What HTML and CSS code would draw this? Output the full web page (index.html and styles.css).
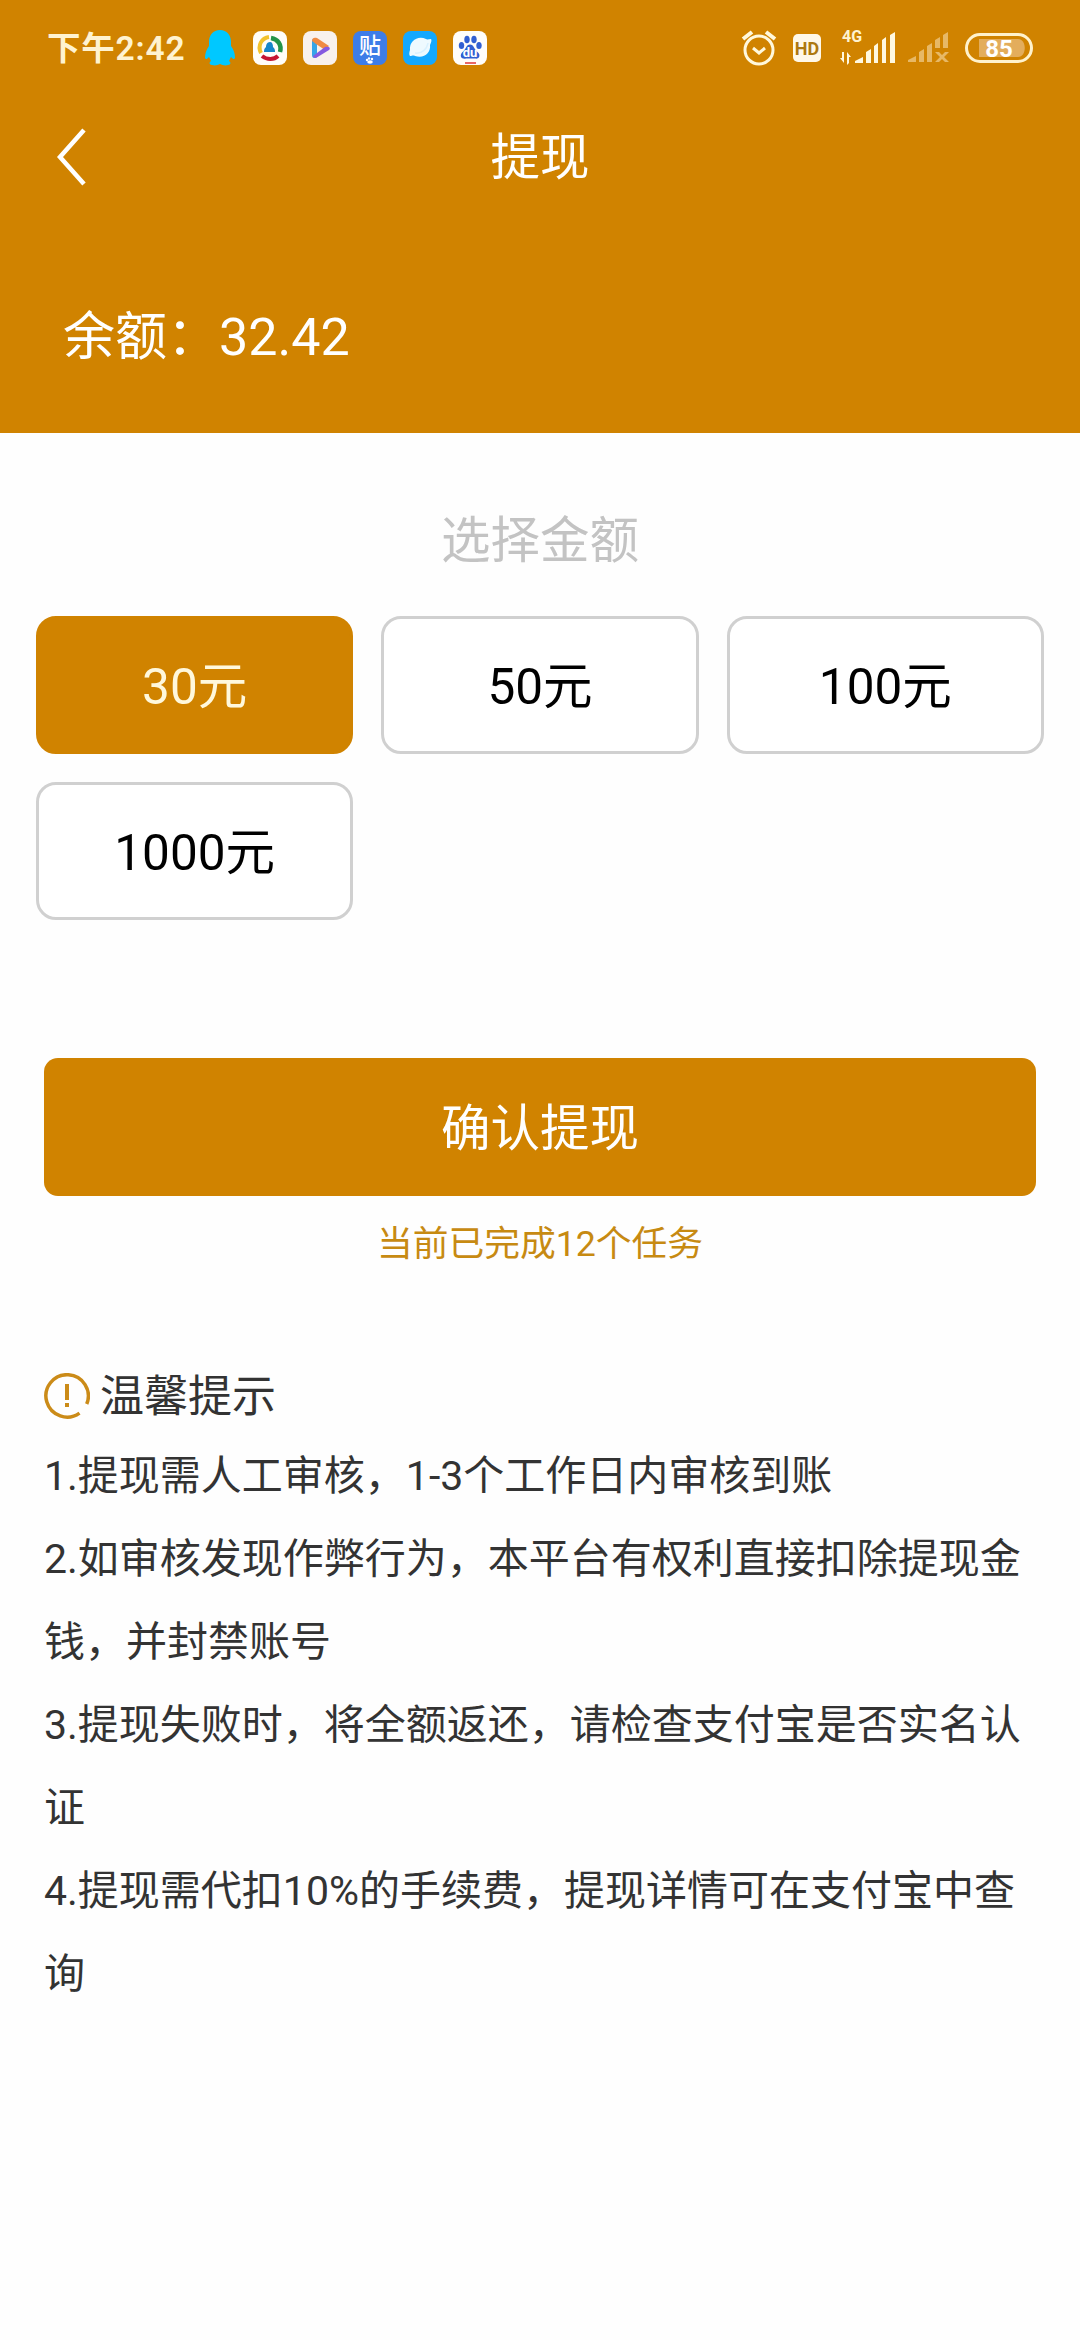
FILE: index.html
```html
<!DOCTYPE html>
<html lang="zh-CN">
<head>
<meta charset="utf-8">
<title>提现</title>
<link rel="stylesheet" href="styles.css">
</head>
<body>
<header class="header">
  <div class="status">
    <span class="time">下午2:42</span>
    <div class="apps">
      <svg class="penguin" width="32" height="36" viewBox="0 0 32 36"><path fill="#00c8ff" d="M16 0C9 0 5 5 5 12v4C2 20 1 24 1 28c1 2 2 1 4-1l2 4c-2 1-2 4 1 4 3 1 6 0 8-1 2 1 5 2 8 1 3 0 3-3 1-4l2-4c2 2 3 3 4 1 0-4-1-8-4-12v-4C27 5 23 0 16 0z"/></svg>
      <svg width="34" height="34" viewBox="0 0 34 34"><rect width="34" height="34" rx="8" fill="#fffdf8"/><g fill="none" stroke-width="4"><path stroke="#f2c22c" d="M8 22C4 14 9 7 16 6"/><path stroke="#249447" stroke-width="4.500" d="M18 7c7 1 11 7 9 14"/><path stroke="#c51632" d="M25 25c-4 4-11 4-16 0"/></g><path fill="#1786c9" d="M17 11c-3 0-4 3-4 5-2 2-2 3-2 5h11c0-2 0-3-2-5 0-3-1-5-3-5z"/></svg>
      <svg width="34" height="34" viewBox="0 0 34 34"><rect width="34" height="34" rx="8" fill="#f8f1ed"/><path fill="#36a5e8" d="M9 8l5 5v13c-3 2-5 1-5-2z"/><path fill="#f08a42" d="M9 10c0-3 2-4 5-3l12 8-4 4-9-6z"/><path fill="#855ae0" d="M13 27c-2 0-3-1-3-2l12-9c4-1 6 1 4 3z"/></svg>
      <svg width="34" height="34" viewBox="0 0 34 34"><rect width="34" height="34" rx="8" fill="#3d7de8"/><text class="tieba" x="17" y="21.500" text-anchor="middle">贴</text><g fill="#fff"><circle cx="14" cy="29" r="1.2"/><circle cx="16" cy="27.500" r="1.2"/><circle cx="19" cy="28" r="1.2"/><ellipse cx="17" cy="31" rx="2.800" ry="1.800"/></g></svg>
      <svg width="34" height="34" viewBox="0 0 34 34"><rect width="34" height="34" rx="8" fill="#13a8ff"/><path fill="#eefaff" d="M28 8c-2 0-4 1-5 0-8-4-17 2-16 11-1 3-1 5 0 6 2 0 3-1 5 0 9 3 16-3 15-11 1-2 2-5 1-6z"/><path fill="none" stroke="#d8f1ff" stroke-width="1.500" d="M12 22c7 1 12-4 13-10"/></svg>
      <svg width="34" height="34" viewBox="0 0 34 34"><rect width="34" height="34" rx="8" fill="#fffdfa"/><g fill="#315fd2"><ellipse cx="8.500" cy="14.500" rx="2.700" ry="3.500"/><ellipse cx="14" cy="8.500" rx="2.700" ry="3.800"/><ellipse cx="21" cy="8.500" rx="2.700" ry="3.800"/><ellipse cx="26" cy="14.500" rx="2.700" ry="3.500"/><path d="M17 13.500c-4 0-4 5-8 8-3 4 0 7 4 6h9c4 1 6-3 3-6-4-3-4-8-8-8z"/></g><text class="du" x="17" y="26" text-anchor="middle">du</text><path stroke="#e03535" stroke-width="1.500" d="M12 32h11"/></svg>
    </div>
    <div class="system">
      <svg width="36" height="36" viewBox="0 0 36 36" fill="none" stroke="#fff8dc"><circle cx="18" cy="20" r="14" stroke-width="3"/><path stroke-width="3" d="M12 18l6 5 6-5"/><path stroke-width="4" d="M2 9l9-7M34 9l-9-7"/></svg>
      <svg class="hd" width="28" height="28" viewBox="0 0 28 28"><rect width="28" height="28" rx="5" fill="#fff8e8"/><text class="hd-label" x="14" y="20.500" text-anchor="middle">HD</text></svg>
      <svg class="signal" width="56" height="46" viewBox="0 -6 56 46"><text class="network" x="2" y="11">4G</text><g fill="#fff8e0"><path d="M15 32v-2l8-4v6zM26 21l5-3v14h-5zM34 15l4-3v20h-4zM42 9l4-3v26h-4zM50 4l5-3v31h-5zM0 27h2v-6h2v11zM7 34V21l4 5H9v6z"/></g></svg>
      <svg class="dim" width="42" height="32" viewBox="0 0 42 32"><g fill="#e7b866"><path d="M0 30v-2l8-4v6zM11 20l5-3v13h-5zM19 14l5-3v19h-5zM27 8l5-3v11h-5zM35 3l5-3v16h-5z"/><path d="M27 20h4l3 3 3-3h4l-5 5 5 5h-4l-3-3-3 3h-4l5-5z"/></g></svg>
      <svg width="68" height="30" viewBox="0 0 68 30"><rect x="1.500" y="1.500" width="65" height="27" rx="13.500" fill="none" stroke="#fff2cc" stroke-width="3"/><path fill="#e3ad5c" d="M14 6h39c9 0 9 18 0 18H14z"/><text class="battery" x="34" y="23.500" text-anchor="middle">85</text></svg>
    </div>
  </div>
  <div class="navbar">
    <svg class="back" width="30" height="58" viewBox="0 0 30 58"><path d="M28 2L4 29l24 27" fill="none" stroke="#fff" stroke-width="4.500"/></svg>
    <h1 class="title">提现</h1>
  </div>
  <div class="balance">余额：32.42</div>
</header>
<main>
  <h2 class="choose">选择金额</h2>
  <div class="amounts">
    <button class="amount selected">30元</button>
    <button class="amount">50元</button>
    <button class="amount">100元</button>
    <button class="amount">1000元</button>
  </div>
  <button class="confirm">确认提现</button>
  <p class="progress">当前已完成12个任务</p>
  <section class="tips">
    <h3 class="tips-title"><svg width="46" height="46" viewBox="0 0 46 46" fill="none" stroke="#cb8b18"><path stroke-width="3.500" d="M35.500 40.100A21.200 21.200 0 1 1 42.700 31"/><path stroke-width="4" d="M23 11v16M23 30v4"/></svg><span>温馨提示</span></h3>
    <p>1.提现需人工审核，1-3个工作日内审核到账</p>
    <p>2.如审核发现作弊行为，本平台有权利直接扣除提现金钱，并封禁账号</p>
    <p>3.提现失败时，将全额返还，请检查支付宝是否实名认证</p>
    <p>4.提现需代扣10%的手续费，提现详情可在支付宝中查询</p>
  </section>
</main>
</body>
</html>
```
FILE: styles.css
```css
* { box-sizing: border-box; }
body {
  margin: 0;
  min-height: 2340px;
  background: #fefefe;
  color: #333;
  font-family: Roboto, "Noto Sans CJK SC", sans-serif;
}
h1, h2, h3, p { margin: 0; font-weight: 400; }
svg { display: block; flex: none; }
button { font: inherit; padding: 0; }

.header { height: 433px; background: #d08300; color: #fff; }
.status {
  display: flex;
  align-items: center;
  height: 96px;
  padding: 0 47px;
}
.time {
  width: 157px;
  padding-top: 2px;
  color: #fff3d0;
  font-size: 33.5px;
  font-weight: 600;
  letter-spacing: 0.8px;
  line-height: 48px;
  white-space: nowrap;
}
.apps { display: flex; align-items: center; gap: 16px; }
.penguin { margin-right: 1px; }
.system { display: flex; align-items: center; margin-left: auto; }
.hd { margin-left: 16px; }
.signal { margin-left: 19px; }
.dim { margin-left: 12px; margin-right: 15px; }
.tieba { fill: #fff; font-size: 22px; font-weight: 500; }
.du { fill: #fff; font-size: 13px; font-weight: 700; }
.hd-label { fill: #ad780f; font-size: 18px; font-weight: 700; }
.network { fill: #fff3d0; font-size: 16px; font-weight: 700; }
.battery { fill: #fff; font-size: 24px; font-weight: 700; }

.navbar {
  display: grid;
  grid-template-columns: 100px 1fr 100px;
  align-items: center;
  height: 121px;
}
.back { margin-left: 56px; }
.title {
  padding-top: 3px;
  font-size: 49.5px;
  line-height: 72px;
  text-align: center;
}
.balance { padding: 83px 63px 0; font-size: 52px; line-height: 76px; }

.choose {
  padding-top: 72px;
  color: #c3c3c3;
  font-size: 49.5px;
  line-height: 72px;
  text-align: center;
}
.amounts {
  display: grid;
  grid-template-columns: repeat(3, 1fr);
  grid-auto-rows: 138px;
  gap: 28px;
  padding: 39px 36px 0;
}
.amount {
  padding-bottom: 5px;
  border: 3px solid #d0d0d0;
  border-radius: 20px;
  background: #fff;
  color: #000;
  font-size: 49.5px;
}
.selected { border-color: #d08300; background: #d08300; color: #fff8dc; }
.confirm {
  display: block;
  width: 992px;
  height: 138px;
  margin: 138px auto 0;
  padding-bottom: 5px;
  border: 0;
  border-radius: 14px;
  background: #d08300;
  color: #fff;
  font-size: 49.5px;
}
.progress {
  padding-top: 21px;
  color: #c78a12;
  font-size: 35.75px;
  line-height: 54px;
  text-align: center;
}
.tips { padding: 92px 44px 0; font-size: 41px; line-height: 83px; }
.tips-title {
  display: flex;
  align-items: center;
  gap: 10px;
  height: 66px;
  margin-bottom: 6px;
  font-size: 44px;
}
.tips-title span { padding-top: 2px; }
```
